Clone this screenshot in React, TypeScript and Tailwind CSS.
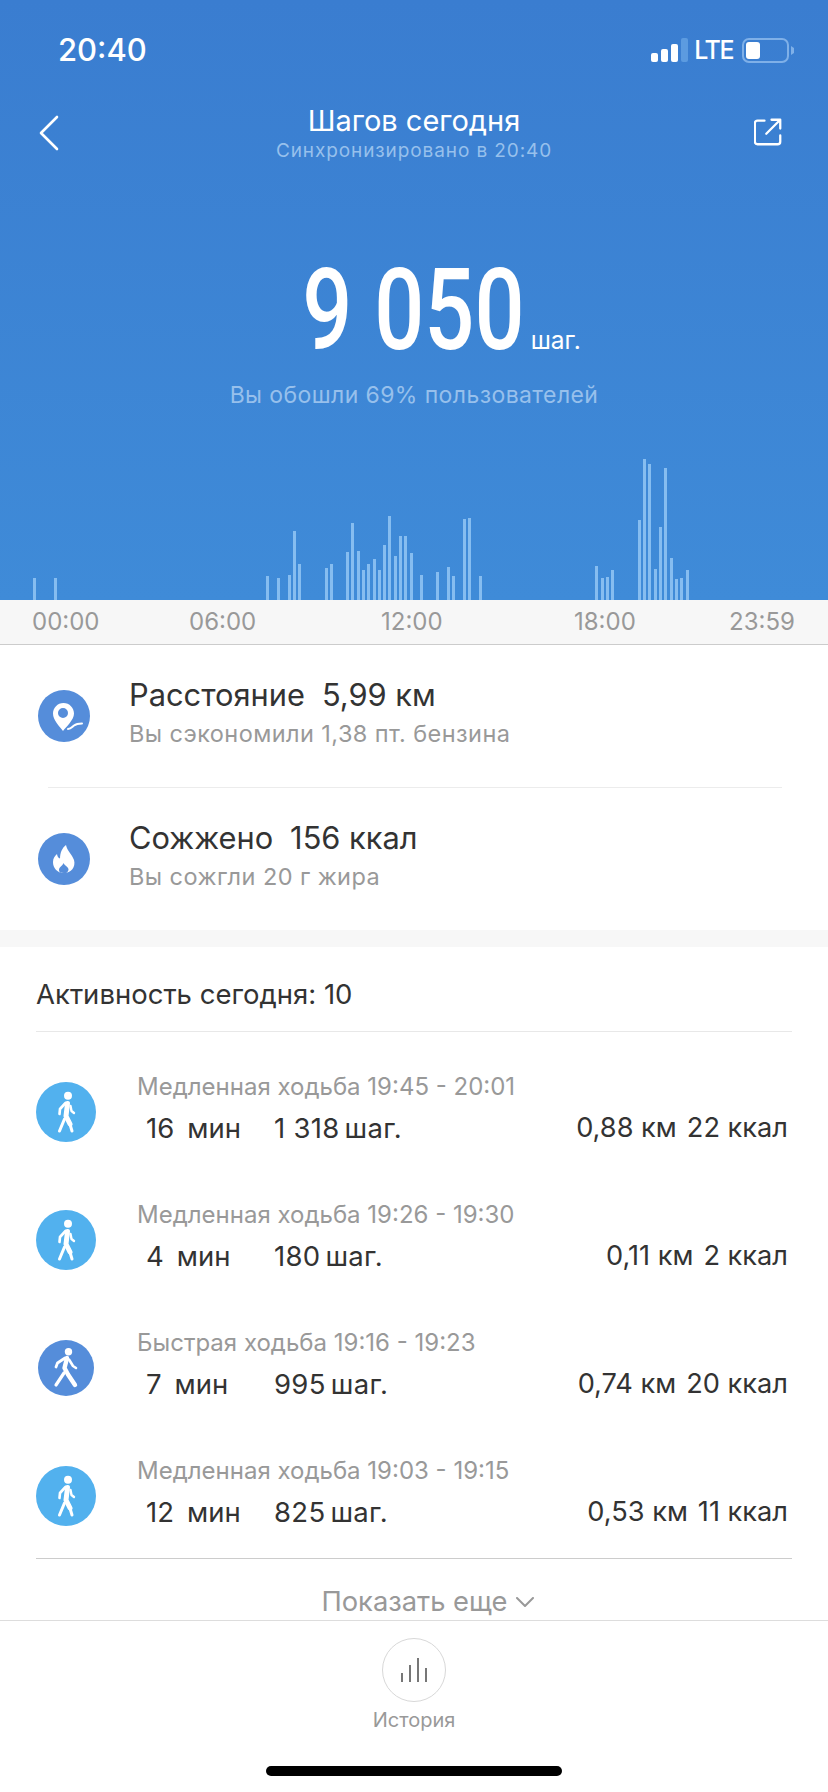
import type { ReactNode } from 'react'

const font = { fontFamily: 'Inter, "Noto Sans", sans-serif' }

const bars: [number, number][] = [
  [33, 22], [54, 22], [266, 24], [277, 22], [288, 25], [293, 69], [298, 36], [325, 32], [330, 36],
  [346, 48], [351, 77], [357, 49], [362, 30], [367, 36], [373, 41], [378, 30], [383, 55], [388, 84],
  [394, 44], [399, 64], [404, 64], [410, 47], [420, 25], [436, 28], [447, 33], [452, 24], [463, 81],
  [468, 82], [479, 24], [595, 34], [601, 22], [606, 23], [611, 30], [638, 80], [643, 141], [648, 136],
  [654, 31], [659, 73], [664, 132], [670, 42], [675, 21], [680, 22], [686, 30],
]

const activities = [
  { title: 'Медленная ходьба 19:45 - 20:01', min: '16', steps: '1 318', km: '0,88', kcal: '22', fast: false },
  { title: 'Медленная ходьба 19:26 - 19:30', min: '4', steps: '180', km: '0,11', kcal: '2', fast: false },
  { title: 'Быстрая ходьба 19:16 - 19:23', min: '7', steps: '995', km: '0,74', kcal: '20', fast: true },
  { title: 'Медленная ходьба 19:03 - 19:15', min: '12', steps: '825', km: '0,53', kcal: '11', fast: false },
]

function StatusBar() {
  return (
    <div className="mt-[25px] flex h-[44px] items-center justify-between pl-[58px] pr-[34px] pt-[6px]">
      <span className="text-[31px] font-medium text-white">20:40</span>
      <div className="flex items-center gap-[7px]">
        <svg width="37" height="24" viewBox="0 0 37 24" className="mr-[-1px]">
          <rect x="0" y="15" width="7" height="9" rx="2" fill="#fff" />
          <rect x="10" y="11" width="7" height="13" rx="2" fill="#fff" />
          <rect x="20" y="6" width="7" height="18" rx="2" fill="#fff" />
          <rect x="30" y="0" width="7" height="24" rx="2" fill="#5c9be0" />
        </svg>
        <span className="text-[25px] font-medium leading-none tracking-[-1.5px] text-white">LTE</span>
        <svg width="52" height="25" viewBox="0 0 52 25" className="ml-[2px]">
          <rect x="1" y="1" width="45" height="23" rx="6" fill="none" stroke="#7fb0e8" strokeWidth="2" />
          <rect x="4" y="4" width="14" height="17" rx="3" fill="#fff" />
          <path d="M49 8 L52 10 V15 L49 17 Z" fill="#7fb0e8" />
        </svg>
      </div>
    </div>
  )
}

function PinIcon() {
  return (
    <svg viewBox="0 0 52 52" className="size-[52px]">
      <circle cx="26" cy="26" r="26" fill="#558dda" />
      <path fillRule="evenodd" d="M25.5 13 C19.5 13 15 18 15 23.5 C15 30 21 36 25 41 C28 37 36 30 36 23.5 C36 18 31.5 13 25.5 13 Z M25 18 a5 5 0 1 1 0 10 a5 5 0 1 1 0 -10 Z" fill="#fff" />
      <path d="M30 39 C33 39 34 37 36 35.5 C38 34 40 33.5 44 33.5" fill="none" stroke="#fff" strokeWidth="2" strokeLinecap="round" />
    </svg>
  )
}

function FlameIcon() {
  return (
    <svg viewBox="0 0 52 52" className="size-[52px]">
      <circle cx="26" cy="26" r="26" fill="#558dda" />
      <path fillRule="evenodd" d="M28 12 C29 18 34 21 36 27 C38 34 33 40 26 40 C19 40 15 35 15 29 C15 25 17 23 19 21 C19.5 24 20.5 25 22 25.5 C22 20 24 15 28 12 Z M25.5 30 C24.5 33 21 34 21 37 C21 38.5 22 39.5 23 40 L28 40 C29.5 39 30.5 38 30.5 36.5 C30.5 33.5 26.5 33 25.5 30 Z" fill="#fff" />
    </svg>
  )
}

function WalkIcon({ fast }: { fast: boolean }) {
  if (fast) {
    return (
      <svg viewBox="0 0 56 56" className="size-[56px]">
        <circle cx="28" cy="28" r="28" fill="#558dda" />
        <circle cx="30.5" cy="11.7" r="3.7" fill="#fff" />
        <path d="M27 18 L19.5 23 L18 27" fill="none" stroke="#fff" strokeWidth="2.8" strokeLinecap="round" strokeLinejoin="round" />
        <path d="M31 19.5 L35 26 L38 28" fill="none" stroke="#fff" strokeWidth="2.6" strokeLinecap="round" strokeLinejoin="round" />
        <path d="M29 18 L26.5 28 L30 34.5 L37 45" fill="none" stroke="#fff" strokeWidth="4.4" strokeLinecap="round" strokeLinejoin="round" />
        <path d="M26 33 L18 45" fill="none" stroke="#fff" strokeWidth="3.2" strokeLinecap="round" />
      </svg>
    )
  }
  return (
    <svg viewBox="0 0 60 60" className="size-[60px]">
      <circle cx="30" cy="30" r="30" fill="#52b1ee" />
      <circle cx="32" cy="13.7" r="4" fill="#fff" />
      <path d="M29.5 21 L24 27 L23.5 32" fill="none" stroke="#fff" strokeWidth="2.6" strokeLinecap="round" strokeLinejoin="round" />
      <path d="M34.5 24 L35.5 29 L38 31" fill="none" stroke="#fff" strokeWidth="2.4" strokeLinecap="round" strokeLinejoin="round" />
      <path d="M31.5 21.5 L30 34 L34 42" fill="none" stroke="#fff" strokeWidth="5" strokeLinecap="round" strokeLinejoin="round" />
      <path d="M28.5 37 L23.5 49" fill="none" stroke="#fff" strokeWidth="3" strokeLinecap="round" />
      <path d="M33 39 L36 49" fill="none" stroke="#fff" strokeWidth="3" strokeLinecap="round" />
    </svg>
  )
}

function SummaryRow({ icon, label, value, note }: { icon: ReactNode; label: string; value: string; note: string }) {
  return (
    <div className="flex h-[142px] items-center pl-[38px]">
      {icon}
      <div className="mb-[9px] ml-[39px]">
        <div className="text-[30.8px] leading-[40px] text-[#333]">
          {label}
          <span className="ml-[17px]">{value}</span>
        </div>
        <div className="mt-[4px] text-[23.5px] leading-[30px] tracking-[0.43px] text-[#999]">{note}</div>
      </div>
    </div>
  )
}

function ActivityRow({ item }: { item: (typeof activities)[number] }) {
  return (
    <div className="flex h-[128px] items-center pl-[36px] pr-[40px]">
      <div className="mt-[4px] flex w-[60px] justify-center">
        <WalkIcon fast={item.fast} />
      </div>
      <div className="mb-[3px] ml-[41px] flex-1">
        <div className="text-[24px] leading-[30px] text-[#999]">{item.title}</div>
        <div className="mt-[9px] flex text-[27.5px] leading-[34px] text-[#333]">
          <span className="ml-[9px] w-[128px]">
            {item.min}
            <span className="ml-[13px]">мин</span>
          </span>
          <span className="tracking-[0.3px]">
            {item.steps}
            <span className="ml-[5px]">шаг.</span>
          </span>
          <span className="ml-auto text-[27.2px]">
            {item.km} км
            <span className="ml-[10px]">{item.kcal} ккал</span>
          </span>
        </div>
      </div>
    </div>
  )
}

export default function App() {
  return (
    <div className="flex h-[1792px] w-[828px] flex-col overflow-hidden bg-white" style={font}>
      {/* Blue header with the day chart */}
      <div className="flex h-[600px] flex-col bg-gradient-to-b from-[#3a7dd0] to-[#3f8bd8]">
        <StatusBar />
        <div className="relative mt-[34px] flex flex-col items-center">
          <button type="button" className="absolute left-[38px] top-[12px] text-white">
            <svg width="22" height="36" viewBox="0 0 22 36" fill="none" stroke="#fff" strokeWidth="2.6" strokeLinecap="round" strokeLinejoin="round">
              <path d="M19 2 L3 18 L19 34" />
            </svg>
          </button>
          <button type="button" className="absolute right-[46px] top-[15px]">
            <svg width="28" height="28" viewBox="0 0 32 32" fill="none" stroke="#fff" strokeWidth="2.6" strokeLinecap="round" strokeLinejoin="round">
              <path d="M12 3 H4 a3 3 0 0 0 -3 3 V27 a3 3 0 0 0 3 3 H27 a3 3 0 0 0 3 -3 V20" />
              <path d="M14 18 L30 2 M20 2 H30 V12" />
            </svg>
          </button>
          <div className="text-[29px] leading-[36px] text-white">Шагов сегодня</div>
          <div className="text-[19px] leading-[24px] tracking-[0.9px] text-[#97c0ec]">Синхронизировано в 20:40</div>
        </div>
        <div className="mt-[92px] flex items-end justify-center pr-[10px]">
          <span className="origin-right scale-x-[0.773] font-['Roboto'] text-[114px] font-medium leading-[110px] text-white">9 050</span>
          <span className="mb-[14px] ml-[6px] text-[24.5px] leading-[22px] text-white">шаг.</span>
        </div>
        <div className="mt-[15px] text-center text-[23px] leading-[30px] tracking-[0.4px] text-[#97c0ec]">Вы обошли 69% пользователей</div>
        <svg width="828" height="160" viewBox="0 0 828 160" className="mt-auto block">
          {bars.map(([x, h]) => (
            <rect key={x} x={x} y={160 - h} width="3" height={h} fill="#86bdf0" />
          ))}
        </svg>
      </div>

      {/* Time axis */}
      <div className="relative h-[45px] border-b border-[#cccccc] bg-[#f7f7f7] text-[24px] leading-[44px] text-[#999]">
        <span className="absolute left-[32px]">00:00</span>
        <span className="absolute left-[189px]">06:00</span>
        <span className="absolute left-[381px]">12:00</span>
        <span className="absolute left-[574px]">18:00</span>
        <span className="absolute left-[729px]">23:59</span>
      </div>

      <SummaryRow icon={<PinIcon />} label="Расстояние" value="5,99 км" note="Вы сэкономили 1,38 пт. бензина" />
      <div className="ml-[48px] mr-[46px] h-px bg-[#ececec]" />
      <SummaryRow icon={<FlameIcon />} label="Сожжено" value="156 ккал" note="Вы сожгли 20 г жира" />
      <div className="h-[17px] bg-[#f7f7f7]" />

      {/* Activity list */}
      <div className="flex h-[84px] items-center pt-[12px]">
        <div className="ml-[36px] text-[27.5px] text-[#333]">Активность сегодня: 10</div>
      </div>
      <div className="mx-[36px] h-px bg-[#e8e8e8]" />
      <div className="pt-[14px]">
        {activities.map((item) => (
          <ActivityRow key={item.title} item={item} />
        ))}
      </div>
      <div className="mx-[36px] h-px bg-[#ccc]" />
      <div className="flex h-[62px] items-center justify-center gap-[8px] border-b border-[#ddd] pl-[27px] pt-[25px] text-[27.3px] text-[#999]">
        Показать еще
        <svg width="18" height="10" viewBox="0 0 18 10" fill="none" stroke="#999" strokeWidth="2" strokeLinecap="round" strokeLinejoin="round">
          <path d="M1 1 L9 9 L17 1" />
        </svg>
      </div>

      {/* Bottom action */}
      <div className="flex flex-1 flex-col items-center pt-[17px]">
        <div className="flex size-[64px] items-center justify-center rounded-full border border-[#d8d8d8]">
          <svg width="28" height="24" viewBox="0 0 28 24" stroke="#777" strokeWidth="2">
            <path d="M2 15 V24 M10 7 V24 M18 0 V24 M26 10 V24" />
          </svg>
        </div>
        <div className="mt-[6px] text-[20px] leading-[24px] text-[#999]">История</div>
        <div className="mt-[34px] h-[10px] w-[296px] rounded-full bg-black" />
      </div>
    </div>
  )
}
